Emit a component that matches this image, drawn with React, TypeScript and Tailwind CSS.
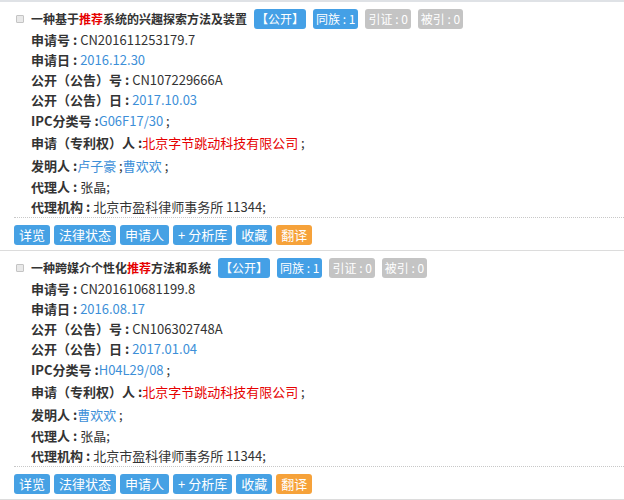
import React from "react";

type Patent = {
  title: [string, string, string];
  appNo: string;
  appDate: string;
  pubNo: string;
  pubDate: string;
  ipc: string;
  applicant: string;
  inventors: string[];
  agent: string;
  agency: string;
};

const patents: Patent[] = [
  {
    title: ["一种基于", "推荐", "系统的兴趣探索方法及装置"],
    appNo: "CN201611253179.7",
    appDate: "2016.12.30",
    pubNo: "CN107229666A",
    pubDate: "2017.10.03",
    ipc: "G06F17/30",
    applicant: "北京字节跳动科技有限公司",
    inventors: ["卢子豪", "曹欢欢"],
    agent: "张晶;",
    agency: "北京市盈科律师事务所 11344;",
  },
  {
    title: ["一种跨媒介个性化", "推荐", "方法和系统"],
    appNo: "CN201610681199.8",
    appDate: "2016.08.17",
    pubNo: "CN106302748A",
    pubDate: "2017.01.04",
    ipc: "H04L29/08",
    applicant: "北京字节跳动科技有限公司",
    inventors: ["曹欢欢"],
    agent: "张晶;",
    agency: "北京市盈科律师事务所 11344;",
  },
];

const actions = ["详览", "法律状态", "申请人", "+ 分析库", "收藏"];

const Row = ({
  label,
  h,
  children,
}: {
  label: string;
  h: string;
  children: React.ReactNode;
}) => (
  <div className={`flex items-center whitespace-pre ${h}`}>
    <span className="font-bold text-[#333]">{label}</span>
    {children}
  </div>
);

const PatentItem = ({ p }: { p: Patent }) => (
  <div className="border-b border-[#dcdcdc] pl-[14px] pt-[7px] pb-[5px]">
    <div className="flex h-[20px] items-center gap-[7px]">
      <span className="ml-[2px] h-[8px] w-[8px] rounded-[1px] border border-[#c4c4c4] bg-[#e9e9e9]" />
      <span className="text-[12px] font-bold text-[#333]">
        {p.title[0]}
        <span className="text-[#e60000]">{p.title[1]}</span>
        {p.title[2]}
      </span>
      <span className="flex h-[20px] items-center rounded-[3px] bg-[#44a0e6] px-[2px] text-[12px] text-white">
        【公开】
      </span>
      <span className="flex h-[20px] items-center rounded-[3px] bg-[#44a0e6] px-[3px] text-[12px] text-white">
        同族 : 1
      </span>
      <span className="flex h-[20px] items-center rounded-[3px] bg-[#c4c4c4] px-[3px] text-[12px] text-white">
        引证 : 0
      </span>
      <span className="flex h-[20px] items-center rounded-[3px] bg-[#c4c4c4] px-[3px] text-[12px] text-white">
        被引 : 0
      </span>
    </div>
    <div className="pl-[17px] pt-[1px] text-[13px] text-[#333]">
      <Row label="申请号 : " h="h-[20px]">
        <span>{p.appNo}</span>
      </Row>
      <Row label="申请日 : " h="h-[20px]">
        <span className="text-[#3d8fd8]">{p.appDate}</span>
      </Row>
      <Row label="公开（公告）号 : " h="h-[20px]">
        <span>{p.pubNo}</span>
      </Row>
      <Row label="公开（公告）日 : " h="h-[20px]">
        <span className="text-[#3d8fd8]">{p.pubDate}</span>
      </Row>
      <Row label="IPC分类号 :" h="h-[21px]">
        <span className="text-[#3d8fd8]">{p.ipc}</span>
        <span> ;</span>
      </Row>
      <Row label="申请（专利权）人 :" h="h-[23px]">
        <span className="text-[#e60000]">{p.applicant}</span>
        <span> ;</span>
      </Row>
      <Row label="发明人 :" h="h-[23px]">
        {p.inventors.map((n) => (
          <React.Fragment key={n}>
            <span className="text-[#3d8fd8]">{n}</span>
            <span> ;</span>
          </React.Fragment>
        ))}
      </Row>
      <Row label="代理人 : " h="h-[20px]">
        <span>{p.agent}</span>
      </Row>
      <Row label="代理机构 : " h="h-[20px]">
        <span>{p.agency}</span>
      </Row>
    </div>
    <div className="border-t border-dotted border-[#c8c8c8]" />
    <div className="mt-[7px] flex gap-[4px] text-[13px] text-white">
      {actions.map((a) => (
        <span
          key={a}
          className="flex h-[20px] items-center rounded-[3px] bg-[#46a1e4] px-[5px]"
        >
          {a}
        </span>
      ))}
      <span className="flex h-[20px] items-center rounded-[3px] bg-[#f6a23a] px-[5px]">
        翻译
      </span>
    </div>
  </div>
);

export default function App() {
  return (
    <div
      className="h-[500px] w-[624px] overflow-hidden border-t-2 border-[#dfe2e6] bg-white"
      style={{ fontFamily: '"Noto Sans CJK SC", "Liberation Sans", sans-serif' }}
    >
      {patents.map((p) => (
        <PatentItem key={p.appNo} p={p} />
      ))}
    </div>
  );
}
